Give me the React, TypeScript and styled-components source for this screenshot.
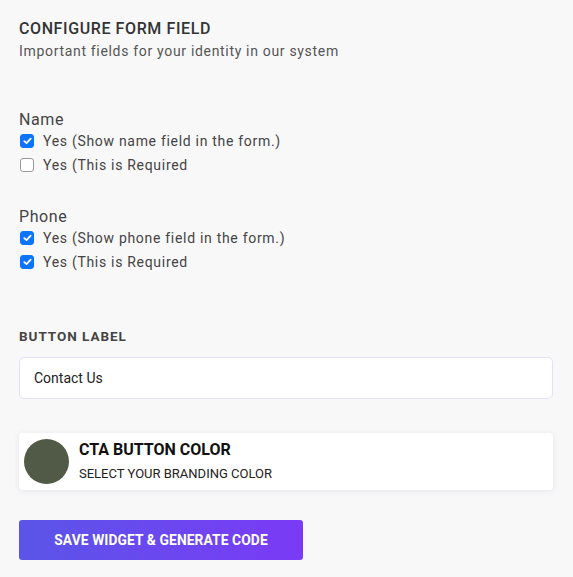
import React from "react";
import styled, { createGlobalStyle } from "styled-components";

const Global = createGlobalStyle`
  html, body { margin: 0; padding: 0; background: #f8f8f9; }
  body { font-family: Roboto, "Liberation Sans", sans-serif; }
  * { box-sizing: border-box; }
`;

const Page = styled.div`
  padding: 19px 20px 16px 19px;
  display: flex;
  flex-direction: column;
`;

const Title = styled.h2`
  margin: 0;
  font-size: 16px;
  font-weight: 500;
  letter-spacing: 0.6px;
  color: #333;
  line-height: 19px;
`;

const Subtitle = styled.p`
  margin: 4px 0 0;
  font-size: 14px;
  letter-spacing: 0.68px;
  color: #555;
  line-height: 18px;
`;

const FieldGroup = styled.div<{ $top: number }>`
  margin-top: ${(p) => p.$top}px;
  display: flex;
  flex-direction: column;
`;

const FieldName = styled.div`
  font-size: 16px;
  color: #444;
  letter-spacing: 0.6px;
  line-height: 19px;
`;

const CheckRow = styled.label`
  display: flex;
  align-items: center;
  gap: 9px;
  height: 24px;
  font-size: 14px;
  color: #444;
  letter-spacing: 0.7px;
  padding-left: 1px;
`;

const Box = styled.span<{ $checked: boolean }>`
  width: 14px;
  height: 14px;
  border-radius: 3px;
  display: inline-flex;
  align-items: center;
  justify-content: center;
  background: ${(p) => (p.$checked ? "#0b75ff" : "#fff")};
  border: 1px solid ${(p) => (p.$checked ? "#0b75ff" : "#999")};
`;

const SectionLabel = styled.div`
  margin-top: 54px;
  font-size: 13.5px;
  font-weight: 700;
  letter-spacing: 0.95px;
  color: #444;
  line-height: 16px;
`;

const Input = styled.input`
  margin-top: 13px;
  width: 534px;
  height: 42px;
  border: 1px solid #e4e0f8;
  border-radius: 5px;
  background: #fff;
  padding: 0 14px;
  font-family: Roboto, "Liberation Sans", sans-serif;
  font-size: 14px;
  color: #222;
  outline: none;
`;

const ColorCard = styled.div`
  margin-top: 34px;
  width: 534px;
  height: 57px;
  background: #fff;
  border-radius: 4px;
  box-shadow: 0 1px 6px rgba(40, 40, 90, 0.09);
  display: flex;
  align-items: center;
  padding-left: 5px;
  gap: 10px;
`;

const Swatch = styled.div`
  width: 45px;
  height: 45px;
  border-radius: 50%;
  background: #515a46;
  flex: none;
`;

const CardText = styled.div`
  display: flex;
  flex-direction: column;
  gap: 7px;
  padding-bottom: 2px;
`;

const CardTitle = styled.div`
  font-size: 16px;
  font-weight: 700;
  color: #111;
  line-height: 19px;
`;

const CardSub = styled.div`
  font-size: 13px;
  color: #222;
  line-height: 15px;
`;

const SaveButton = styled.button`
  margin-top: 30px;
  width: 284px;
  height: 40px;
  border: none;
  border-radius: 3px;
  background: linear-gradient(90deg, #5a55e8 0%, #7b3af6 100%);
  color: #fff;
  font-family: Roboto, "Liberation Sans", sans-serif;
  font-size: 13.8px;
  font-weight: 700;
  letter-spacing: 0.1px;
  cursor: pointer;
`;

function Check({ checked }: { checked: boolean }) {
  return (
    <Box $checked={checked}>
      {checked && (
        <svg width="9" height="8" viewBox="0 0 9 8">
          <path d="M1.3 4.2 L3.5 6.2 L7.7 1.6" fill="none" stroke="#fff" strokeWidth="1.8" strokeLinecap="round" strokeLinejoin="round" />
        </svg>
      )}
    </Box>
  );
}

const fields = [
  { name: "Name", show: true, required: false, top: 50 },
  { name: "Phone", show: true, required: true, top: 30 },
];

export default function App() {
  return (
    <>
      <Global />
      <Page>
        <Title>CONFIGURE FORM FIELD</Title>
        <Subtitle>Important fields for your identity in our system</Subtitle>
        {fields.map((f) => (
          <FieldGroup key={f.name} $top={f.top}>
            <FieldName>{f.name}</FieldName>
            <CheckRow>
              <Check checked={f.show} />
              Yes (Show {f.name.toLowerCase()} field in the form.)
            </CheckRow>
            <CheckRow>
              <Check checked={f.required} />
              Yes (This is Required
            </CheckRow>
          </FieldGroup>
        ))}
        <SectionLabel>BUTTON LABEL</SectionLabel>
        <Input defaultValue="Contact Us" />
        <ColorCard>
          <Swatch />
          <CardText>
            <CardTitle>CTA BUTTON COLOR</CardTitle>
            <CardSub>SELECT YOUR BRANDING COLOR</CardSub>
          </CardText>
        </ColorCard>
        <SaveButton>SAVE WIDGET &amp; GENERATE CODE</SaveButton>
      </Page>
    </>
  );
}
